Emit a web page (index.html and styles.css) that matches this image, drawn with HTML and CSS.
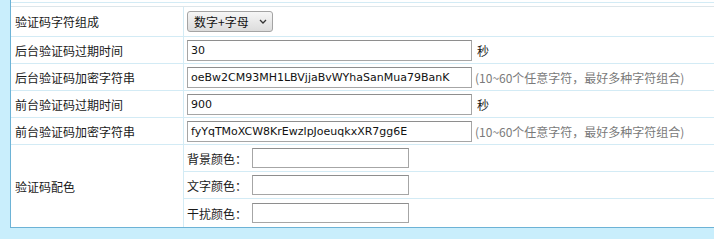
FILE: index.html
```html
<!DOCTYPE html>
<html lang="zh-CN">
<head>
<meta charset="utf-8">
<title>验证码设置</title>
<link rel="stylesheet" href="styles.css">
</head>
<body>
<div class="wrap">
  <div class="panel">
    <div class="box">
      <div class="stub"></div>
      <div class="row first">
        <div class="lbl">验证码字符组成</div>
        <div class="val">
          <div class="select">数字+字母<svg class="chev" width="8" height="5" viewBox="0 0 8 5"><path d="M1 1 L4 4 L7 1" fill="none" stroke="#333" stroke-width="1.3"/></svg></div>
        </div>
      </div>
      <div class="row">
        <div class="lbl">后台验证码过期时间</div>
        <div class="val"><div class="input wide">30</div><span class="unit">秒</span></div>
      </div>
      <div class="row">
        <div class="lbl">后台验证码加密字符串</div>
        <div class="val"><div class="input wide">oeBw2CM93MH1LBVjjaBvWYhaSanMua79BanK</div><span class="hint">(10~60个任意字符，最好多种字符组合)</span></div>
      </div>
      <div class="row">
        <div class="lbl">前台验证码过期时间</div>
        <div class="val"><div class="input wide">900</div><span class="unit">秒</span></div>
      </div>
      <div class="row">
        <div class="lbl">前台验证码加密字符串</div>
        <div class="val"><div class="input wide">fyYqTMoXCW8KrEwzlpJoeuqkxXR7gg6E</div><span class="hint">(10~60个任意字符，最好多种字符组合)</span></div>
      </div>
      <div class="row color">
        <div class="lbl">验证码配色</div>
        <div class="subs">
          <div class="sub"><span class="clbl">背景颜色：</span><div class="input short"></div></div>
          <div class="sub"><span class="clbl">文字颜色：</span><div class="input short"></div></div>
          <div class="sub last"><span class="clbl">干扰颜色：</span><div class="input short"></div></div>
        </div>
      </div>
    </div>
  </div>
  <div class="footline"></div>
</div>
</body>
</html>
```
FILE: styles.css
```css
* { box-sizing: border-box; }
html, body { margin: 0; padding: 0; background: #fff; }
body {
  font-family: "Noto Sans CJK SC", sans-serif;
  font-size: 12px;
  color: #1a1a1a;
}
.wrap { width: 714px; }
.panel {
  background: #c9eefc;
  padding: 0 0 11px 10px;
}
.box {
  background: #fff;
  border-left: 1px solid #6db3d6;
  border-bottom: 1px solid #6db3d6;
}
.stub {
  height: 3px;
  border-bottom: 1px solid #d3ebf5;
  margin-bottom: 3px;
}
.row {
  display: flex;
  height: 27px;
  border-bottom: 1px solid #d3ebf5;
}
.row.first {
  height: 31px;
  border-top: 1px solid #dde6ea;
}
.row.color {
  height: 82px;
  border-bottom: none;
}
.lbl {
  width: 173px;
  flex: none;
  border-right: 1px solid #d3ebf5;
  padding-left: 4px;
  display: flex;
  align-items: center;
}
.val {
  flex: 1;
  display: flex;
  align-items: center;
  padding-left: 3px;
}
.select {
  width: 86px;
  height: 21px;
  border: 1px solid #a4a4a4;
  border-radius: 3px;
  background: linear-gradient(#f6f6f6, #dcdcdc);
  display: flex;
  align-items: center;
  padding-left: 6px;
  color: #111;
}
.chev { margin-left: 10px; }
.input {
  height: 21px;
  border: 1px solid #a6a6a6;
  border-top-color: #8e8e8e;
  background: #fff;
  display: flex;
  align-items: center;
  padding-left: 3px;
  color: #111;
  white-space: nowrap;
  overflow: hidden;
  font-family: "DejaVu Sans", sans-serif;
  font-size: 11px;
}
.input.wide { width: 285px; }
.input.short { width: 157px; height: 20px; }
.unit { margin-left: 5px; }
.hint {
  margin-left: 3px;
  color: #7a7a7a;
}
.subs {
  flex: 1;
  display: flex;
  flex-direction: column;
}
.sub {
  height: 27px;
  border-bottom: 1px solid #d3ebf5;
  display: flex;
  align-items: center;
  padding-left: 3px;
}
.sub.last { height: 28px; border-bottom: none; }
.clbl { width: 65px; }
.footline {
  margin-top: 7px;
  height: 1px;
  background: #d6eef8;
}
```
